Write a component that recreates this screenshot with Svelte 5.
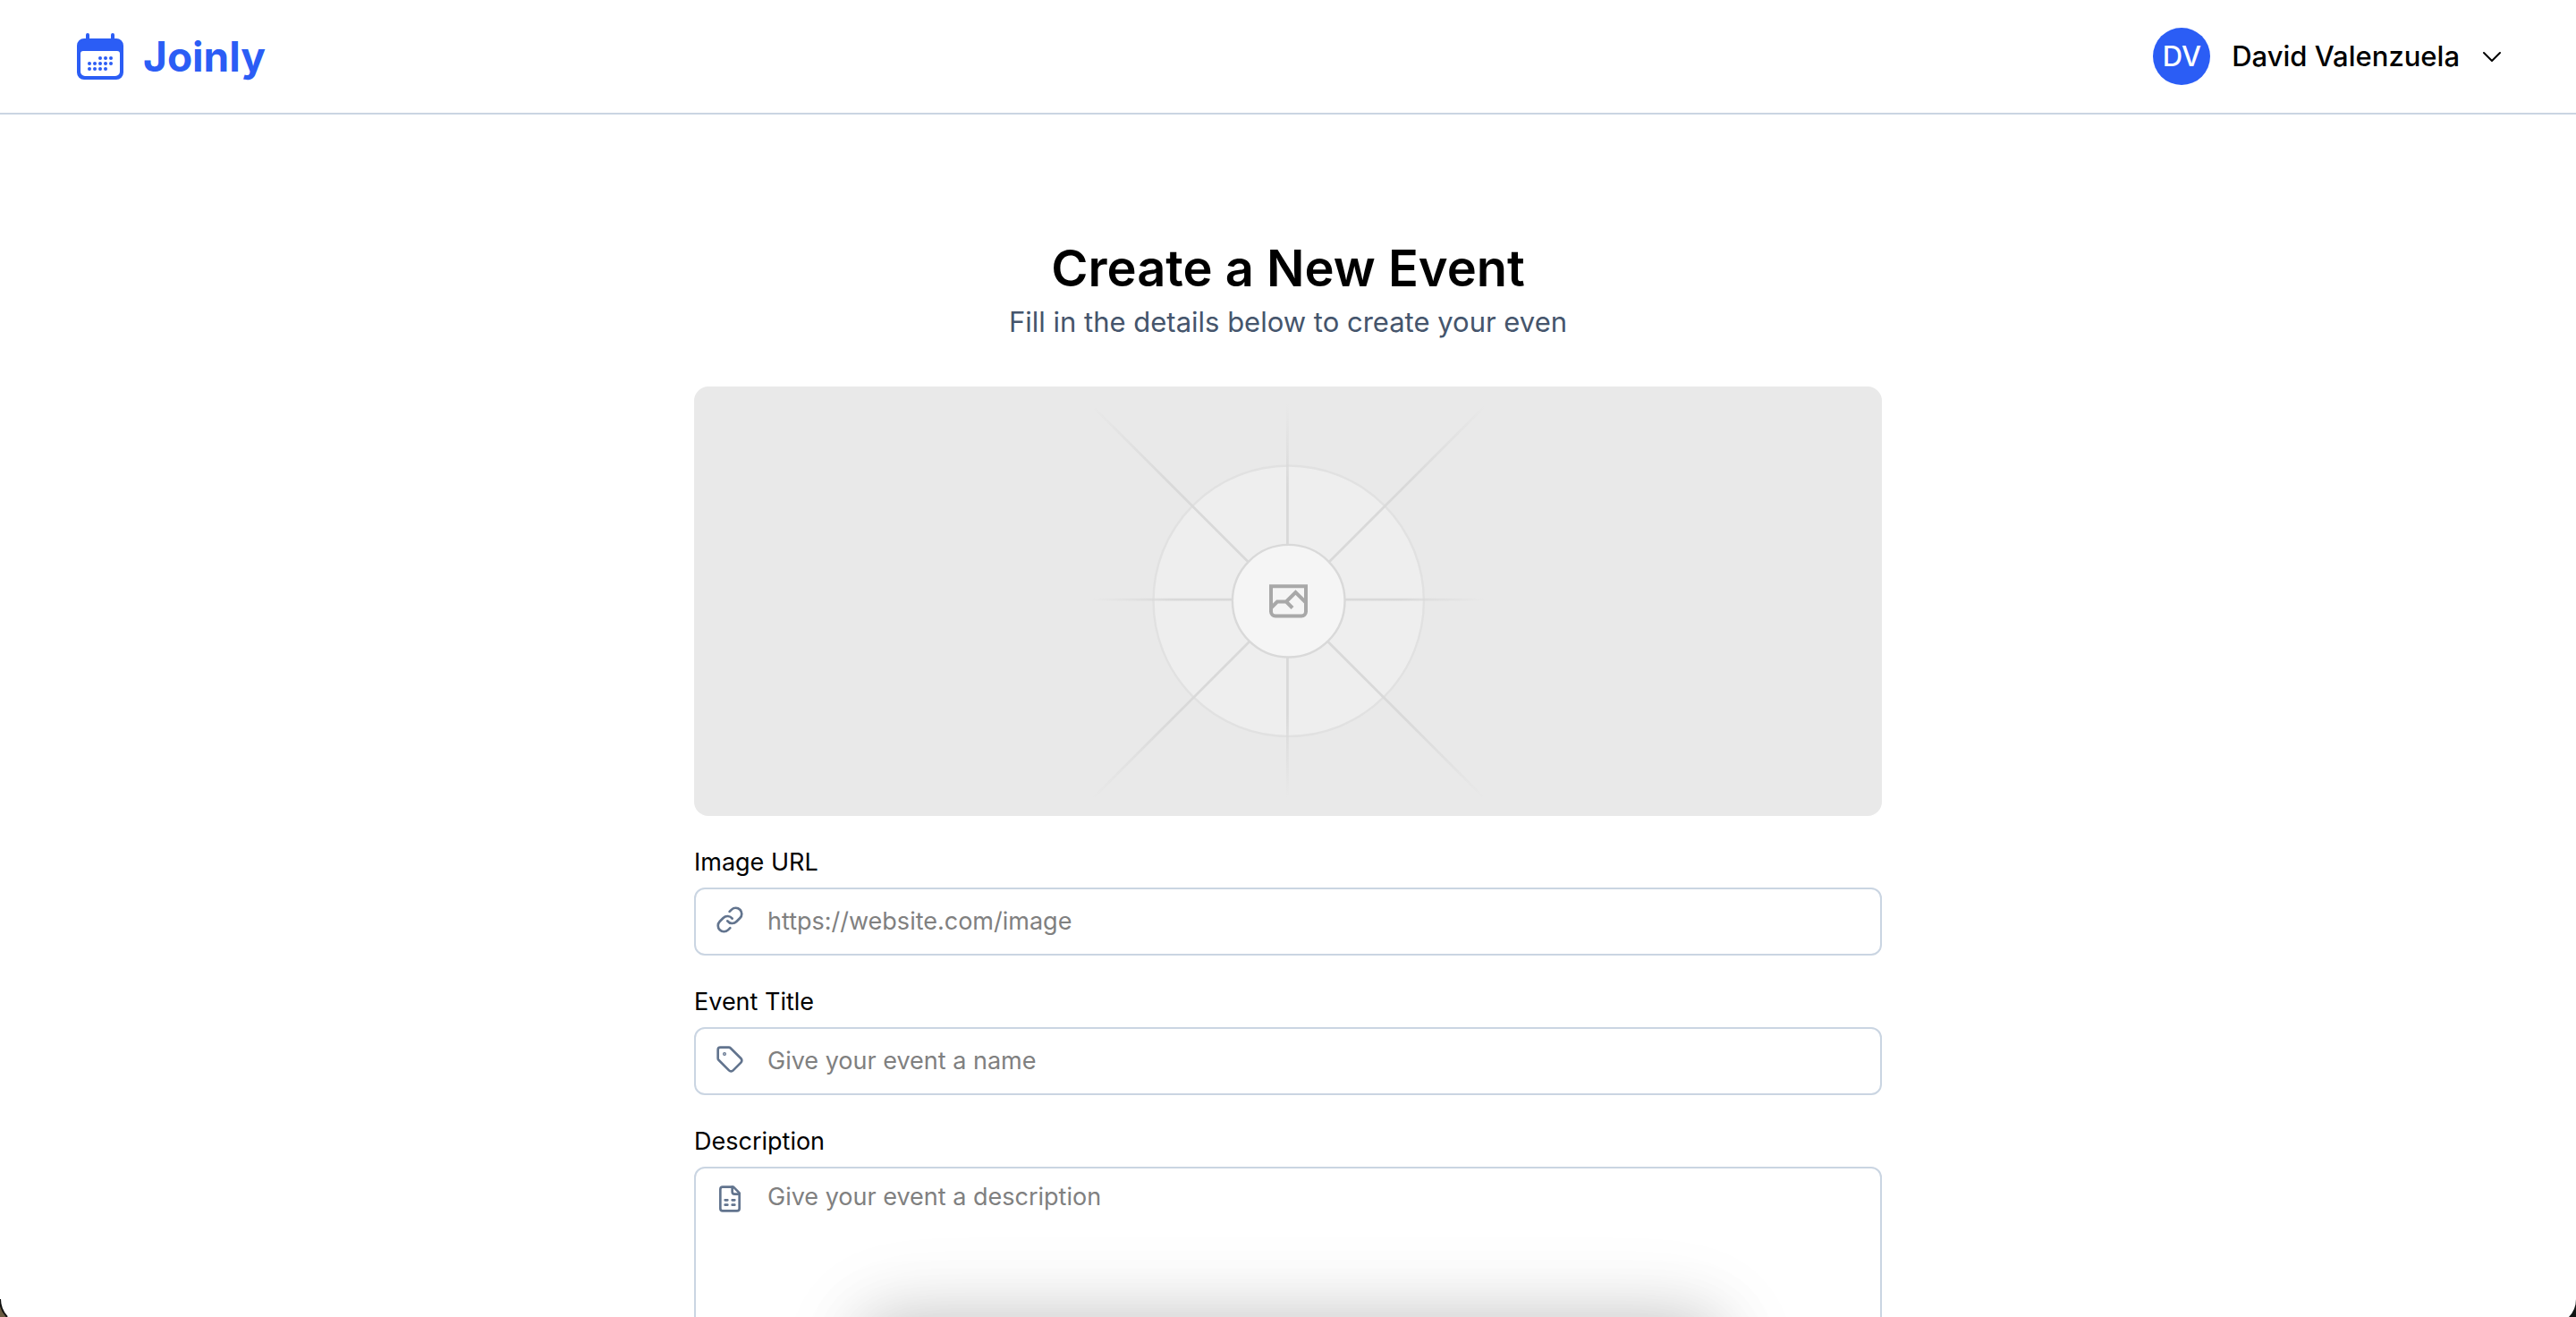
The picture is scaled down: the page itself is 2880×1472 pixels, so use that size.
<script>
  let imageUrl = $state('');
  let title = $state('');
  let description = $state('');

  // Dots of the logo calendar: [x, y] centres.
  const dots = [
    [26, 28], [32, 28], [38, 28],
    [14, 34], [20, 34], [26, 34], [32, 34], [38, 34],
    [14, 40], [20, 40], [26, 40], [32, 40]
  ];
</script>

<div class="page">
  <header>
    <a class="brand" href="/">
      <svg viewBox="0 0 52 52" aria-hidden="true">
        <path d="M12 2v8M40 2v8" stroke="currentColor" stroke-width="4" stroke-linecap="round" />
        <path
          fill="currentColor"
          fill-rule="evenodd"
          d="M8 6h36a8 8 0 0 1 8 8v30a8 8 0 0 1-8 8H8a8 8 0 0 1-8-8V14a8 8 0 0 1 8-8zM7 20a3 3 0 0 0-3 3v20a5 5 0 0 0 5 5h34a5 5 0 0 0 5-5V23a3 3 0 0 0-3-3z"
        />
        {#each dots as [cx, cy]}
          <circle {cx} {cy} r="2" fill="currentColor" />
        {/each}
      </svg>
      <span>Joinly</span>
    </a>
    <button class="account" type="button">
      <span class="avatar">DV</span>
      <span>David Valenzuela</span>
      <svg class="chevron" viewBox="0 0 24 24" aria-hidden="true">
        <path d="M3 8l9 9 9-9" fill="none" stroke="currentColor" stroke-width="2" stroke-linecap="round" stroke-linejoin="round" />
      </svg>
    </button>
  </header>

  <main>
    <h1>Create a New Event</h1>
    <p class="lead">Fill in the details below to create your even</p>

    <div class="preview">
      <svg viewBox="0 2 480 480" fill="none" aria-hidden="true">
        <defs>
          <radialGradient id="axis" gradientUnits="userSpaceOnUse" cx="240" cy="241" r="220">
            <stop offset="0.58" stop-color="#d9d9d9" />
            <stop offset="1" stop-color="#d9d9d9" stop-opacity="0" />
          </radialGradient>
          <radialGradient id="diagonal" gradientUnits="userSpaceOnUse" cx="240" cy="242" r="312">
            <stop offset="0.6" stop-color="#d9d9d9" />
            <stop offset="1" stop-color="#d9d9d9" stop-opacity="0" />
          </radialGradient>
        </defs>
        <circle cx="240.7" cy="241.7" r="151.2" fill="#eee" stroke="#e1e1e1" stroke-width="2.4" />
        <path d="M239.4 20v442M20 240.2h442" stroke="url(#axis)" stroke-width="2.8" />
        <path d="M24 26.500l434 434M460 24L22 462" stroke="url(#diagonal)" stroke-width="2.8" />
        <circle cx="240.7" cy="241.7" r="62.8" fill="#f5f5f5" stroke="#d9d9d9" stroke-width="2.4" />
        <path
          d="M221 225.2h39v28.3a5 5 0 0 1-5 5h-29a5 5 0 0 1-5-5zM221 249.5l7-7h10l10.5-10.5 11.5 11.5M238 242.500l7 7"
          stroke="#a8a8a8"
          stroke-width="4"
        />
      </svg>
    </div>

    <form>
      <div class="field">
        <label for="image-url">Image URL</label>
        <div class="control">
          <svg class="icon" viewBox="0 0 24 24" aria-hidden="true">
            <path d="M10 13a5 5 0 0 0 7.54.54l3-3a5 5 0 0 0-7.07-7.07l-1.72 1.71" />
            <path d="M14 11a5 5 0 0 0-7.54-.54l-3 3a5 5 0 0 0 7.07 7.07l1.71-1.71" />
          </svg>
          <input id="image-url" type="url" placeholder="https://website.com/image" bind:value={imageUrl} />
        </div>
      </div>

      <div class="field">
        <label for="title">Event Title</label>
        <div class="control">
          <svg class="icon" viewBox="0 0 24 24" aria-hidden="true">
            <path d="M12.586 2.586A2 2 0 0 0 11.172 2H4a2 2 0 0 0-2 2v7.172a2 2 0 0 0 .586 1.414l8.704 8.704a2.426 2.426 0 0 0 3.42 0l6.58-6.58a2.426 2.426 0 0 0 0-3.42z" />
            <circle cx="7.5" cy="7.5" r=".5" />
          </svg>
          <input id="title" type="text" placeholder="Give your event a name" bind:value={title} />
        </div>
      </div>

      <div class="field">
        <label for="description">Description</label>
        <div class="control">
          <svg class="icon" viewBox="0 0 24 24" aria-hidden="true">
            <path d="M15 2H6a2 2 0 0 0-2 2v16a2 2 0 0 0 2 2h12a2 2 0 0 0 2-2V7Z" />
            <path d="M14 2v4a2 2 0 0 0 2 2h4M8 13h2M14 13h2M8 17h2M14 17h2" />
          </svg>
          <textarea id="description" rows="6" placeholder="Give your event a description" bind:value={description}></textarea>
        </div>
      </div>
    </form>
  </main>

  <div class="shade"></div>
  <svg class="corner left" viewBox="0 0 10 20" aria-hidden="true">
    <path d="M0 0a29 29 0 0 0 8 20H0z" fill="#6b5b41" />
    <path d="M0 0a29 29 0 0 0 8 20" fill="none" stroke="#111" stroke-width="2" />
  </svg>
  <svg class="corner right" viewBox="0 0 10 20" aria-hidden="true">
    <path d="M10 0a29 29 0 0 1-8 20h8z" fill="#111514" />
  </svg>
</div>

<style>
  :global(body) {
    margin: 0;
  }

  .page {
    position: relative;
    height: 100vh;
    overflow: hidden;
    background: #fff;
    color: #000;
    font-family: Inter, 'Liberation Sans', sans-serif;
    font-size: 27px;
    line-height: 40px;
  }

  header {
    display: flex;
    align-items: center;
    justify-content: space-between;
    height: 126px;
    padding: 0 82px;
    border-bottom: 2px solid #cad5e2;
  }

  .brand {
    display: flex;
    align-items: center;
    gap: 22px;
    padding-left: 4px;
    color: #2b5df5;
    font-size: 46px;
    font-weight: 700;
    line-height: 64px;
    text-decoration: none;
  }

  .brand svg {
    width: 52px;
    height: 52px;
  }

  .account {
    display: flex;
    align-items: center;
    gap: 24px;
    padding: 0;
    border: 0;
    background: none;
    color: inherit;
    font: inherit;
    font-size: 31px;
    font-weight: 500;
  }

  .avatar {
    display: grid;
    place-items: center;
    width: 64px;
    height: 64px;
    border-radius: 50%;
    background: #2b5df5;
    color: #fff;
  }

  .chevron {
    width: 24px;
    height: 24px;
  }

  main {
    max-width: 1328px;
    margin: 0 auto;
    padding: 136px 32px 0;
  }

  h1 {
    margin: 0;
    font-size: 56px;
    font-weight: 600;
    line-height: 72px;
    text-align: center;
  }

  .lead {
    margin: 0;
    color: #45556c;
    font-size: 31px;
    line-height: 48px;
    text-align: center;
  }

  .preview {
    display: flex;
    justify-content: center;
    margin-top: 48px;
    border-radius: 16px;
    background: #e9e9e9;
  }

  .preview svg {
    width: 480px;
    height: 480px;
  }

  form {
    display: flex;
    flex-direction: column;
    gap: 32px;
    padding-top: 32px;
  }

  .field {
    display: flex;
    flex-direction: column;
    gap: 8px;
  }

  .control {
    display: flex;
    align-items: flex-start;
    gap: 26px;
    padding: 0 22px;
    border: 2px solid #cad5e2;
    border-radius: 12px;
  }

  .icon {
    flex: none;
    width: 32px;
    height: 32px;
    margin-top: 18px;
    fill: none;
    stroke: #62748e;
    stroke-width: 2;
    stroke-linecap: round;
    stroke-linejoin: round;
  }

  input,
  textarea {
    flex: 1;
    min-width: 0;
    padding: 16px 0;
    border: 0;
    outline: 0;
    background: none;
    color: inherit;
    font: inherit;
    resize: none;
  }

  input {
    height: 40px;
  }

  textarea {
    padding: 12px 0;
  }

  ::placeholder {
    color: #808080;
    opacity: 1;
  }

  .shade {
    position: absolute;
    top: 100%;
    left: 50%;
    width: 960px;
    height: 200px;
    margin-left: -477px;
    border-radius: 20px;
    box-shadow: 0 0 70px rgba(0, 0, 0, 0.14), 0 0 100px rgba(0, 0, 0, 0.12);
  }

  .corner {
    position: absolute;
    bottom: 0;
    width: 10px;
    height: 20px;
  }

  .left {
    left: 0;
  }

  .right {
    right: 0;
  }
</style>
